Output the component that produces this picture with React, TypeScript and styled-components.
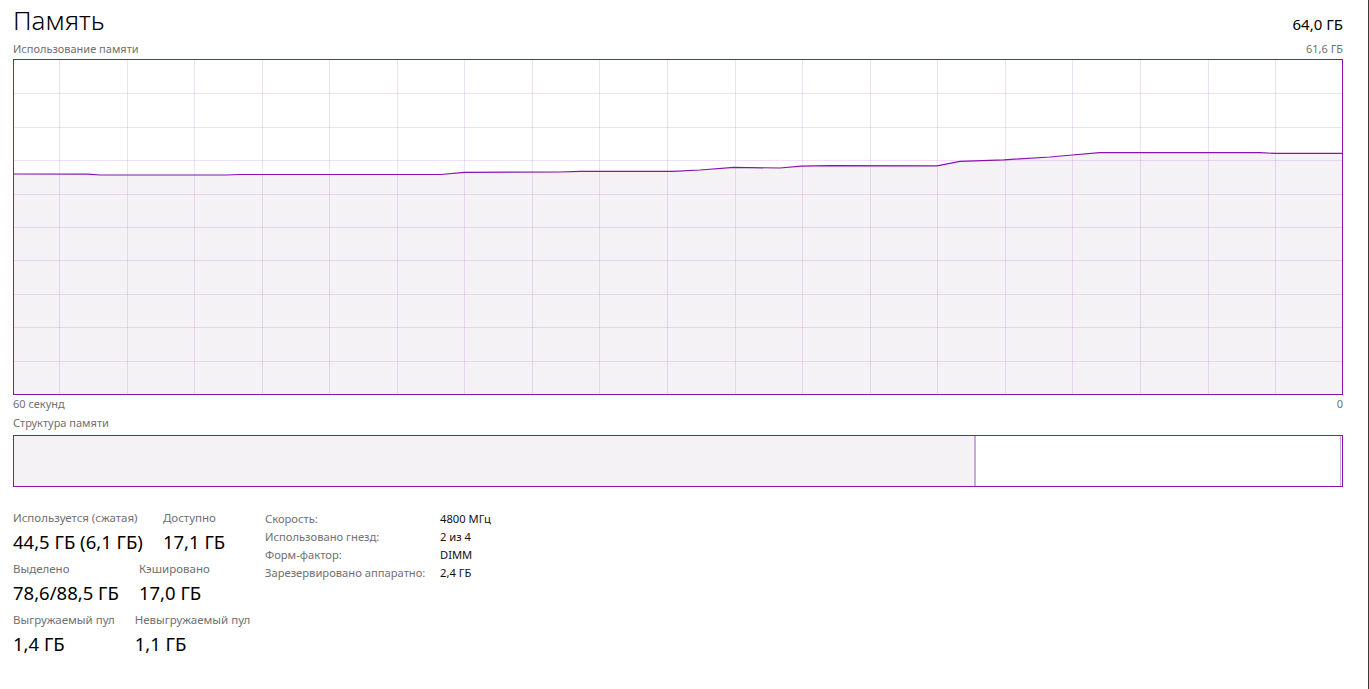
import React from 'react'
import styled, { createGlobalStyle } from 'styled-components'

const PURPLE = '#8b12ae'
const FILL = '#f4f2f5'
const DIVIDER = '#c9a8da'

const GlobalStyle = createGlobalStyle`
  html, body { margin: 0; background: #fff; }
  body { font-family: "Noto Sans", "Open Sans", sans-serif; color: #000; }
  * { box-sizing: border-box; }
`

const Page = styled.div`
  min-height: 100vh;
  padding: 0 25px 0 13px;
  border-right: 1px solid #3c3c3c;
`

const Header = styled.div`
  height: 41px;
  display: flex;
  justify-content: space-between;
  align-items: baseline;
`

const Title = styled.h1`
  margin: 0;
  font-size: 26px;
  font-weight: 300;
  line-height: 41px;
`

const Total = styled.span`
  font-size: 15px;
  line-height: 41px;
`

const Caption = styled.div<{ $gap?: number }>`
  display: flex;
  justify-content: space-between;
  font-size: 11px;
  line-height: 16px;
  color: #707070;
  margin-top: ${p => p.$gap ?? 0}px;
`

const ChartBox = styled.div`
  height: 336px;
  margin-top: 2px;
  border: 1px solid ${PURPLE};
  background: #fff;

  svg { display: block; width: 100%; height: 100%; }
`

const CompositionBar = styled.div`
  height: 52px;
  margin-top: 4px;
  border: 1px solid ${PURPLE};
  display: flex;
`

const Segment = styled.div<{ $fill?: boolean; $grow?: boolean }>`
  background: ${p => (p.$fill ? FILL : '#fff')};
  ${p => (p.$grow ? 'flex: 1;' : '')}
`

const SegmentLine = styled.div<{ $w: number }>`
  width: ${p => p.$w}px;
  background: ${DIVIDER};
`

const Stats = styled.div`
  margin-top: 23px;
  display: grid;
  grid-template-columns: 252px auto;
`

const StatRows = styled.div`
  display: flex;
  flex-direction: column;
  gap: 7px;
`

const StatRow = styled.div`
  display: flex;
  gap: 20px;
`

const Stat = styled.div`
  display: flex;
  flex-direction: column;
`

const StatLabel = styled.span`
  font-size: 11.5px;
  line-height: 16px;
  color: #707070;
  white-space: nowrap;
`

const StatValue = styled.span`
  margin-top: 4px;
  font-size: 18.5px;
  line-height: 24px;
  white-space: nowrap;
`

const InfoTable = styled.div`
  display: grid;
  grid-template-columns: 175px auto;
  align-content: start;
  font-size: 11.2px;
  line-height: 18px;
`

const InfoKey = styled.span`
  color: #707070;
`

const InfoValue = styled.span`
  color: #111;
`

// inner drawing area of the usage graph, in px
const W = 1328
const H = 334

// usage samples as (page x, page y) of the trace
const trace: [number, number][] = [
  [14, 174], [88, 174.2], [100, 175], [226, 175], [240, 174.5], [441, 174.5],
  [464, 172.4], [560, 172], [580, 171.4], [673, 171.4], [700, 170], [734, 167.4],
  [780, 168], [801, 166.2], [830, 165.6], [937, 165.8], [960, 161.4], [1004, 159.8],
  [1050, 157], [1072, 155], [1100, 152.7], [1260, 152.7], [1275, 153.4], [1343, 153.4],
]

const UsageChart: React.FC = () => {
  const pts = trace.map(([x, y]) => [x - 14, y - 60] as [number, number])
  const line = pts.map(([x, y]) => `${x},${y}`).join(' ')
  const area = `0,${H} ${line} ${W},${H}`

  const rows = Array.from({ length: 9 }, (_, i) => Math.round(33.4 * (i + 1)) + 0.5)
  const cols: number[] = []
  for (let x = 45; x < W; x += 67.56) cols.push(Math.round(x) + 0.5)

  return (
    <ChartBox>
      <svg viewBox={`0 0 ${W} ${H}`} preserveAspectRatio="none">
        <polygon points={area} fill={FILL} />
        <g stroke="rgba(139,18,174,0.13)" strokeWidth={1}>
          {rows.map(y => <line key={'r' + y} x1={0} x2={W} y1={y} y2={y} />)}
          {cols.map(x => <line key={'c' + x} x1={x} x2={x} y1={0} y2={H} />)}
        </g>
        <polyline points={line} fill="none" stroke={PURPLE} strokeWidth={1.2} />
      </svg>
    </ChartBox>
  )
}

const stats = [
  [['Используется (сжатая)', '44,5 ГБ (6,1 ГБ)'], ['Доступно', '17,1 ГБ']],
  [['Выделено', '78,6/88,5 ГБ'], ['Кэшировано', '17,0 ГБ']],
  [['Выгружаемый пул', '1,4 ГБ'], ['Невыгружаемый пул', '1,1 ГБ']],
]

const info = [
  ['Скорость:', '4800 МГц'],
  ['Использовано гнезд:', '2 из 4'],
  ['Форм-фактор:', 'DIMM'],
  ['Зарезервировано аппаратно:', '2,4 ГБ'],
]

const App: React.FC = () => {
  return (
    <Page>
      <GlobalStyle />
      <Header>
        <Title>Память</Title>
        <Total>64,0 ГБ</Total>
      </Header>
      <Caption>
        <span>Использование памяти</span>
        <span>61,6 ГБ</span>
      </Caption>
      <UsageChart />
      <Caption $gap={1}>
        <span>60 секунд</span>
        <span>0</span>
      </Caption>
      <Caption $gap={3}>
        <span>Структура памяти</span>
      </Caption>
      <CompositionBar>
        <Segment $fill style={{ width: '72.3%' }} />
        <SegmentLine $w={2} />
        <Segment $grow />
        <SegmentLine $w={1} />
        <Segment style={{ width: 1 }} />
      </CompositionBar>
      <Stats>
        <StatRows>
          {stats.map((row, i) => (
            <StatRow key={i}>
              {row.map(([label, value]) => (
                <Stat key={label}>
                  <StatLabel>{label}</StatLabel>
                  <StatValue>{value}</StatValue>
                </Stat>
              ))}
            </StatRow>
          ))}
        </StatRows>
        <InfoTable>
          {info.map(([k, v]) => (
            <React.Fragment key={k}>
              <InfoKey>{k}</InfoKey>
              <InfoValue>{v}</InfoValue>
            </React.Fragment>
          ))}
        </InfoTable>
      </Stats>
    </Page>
  )
}

export default App
